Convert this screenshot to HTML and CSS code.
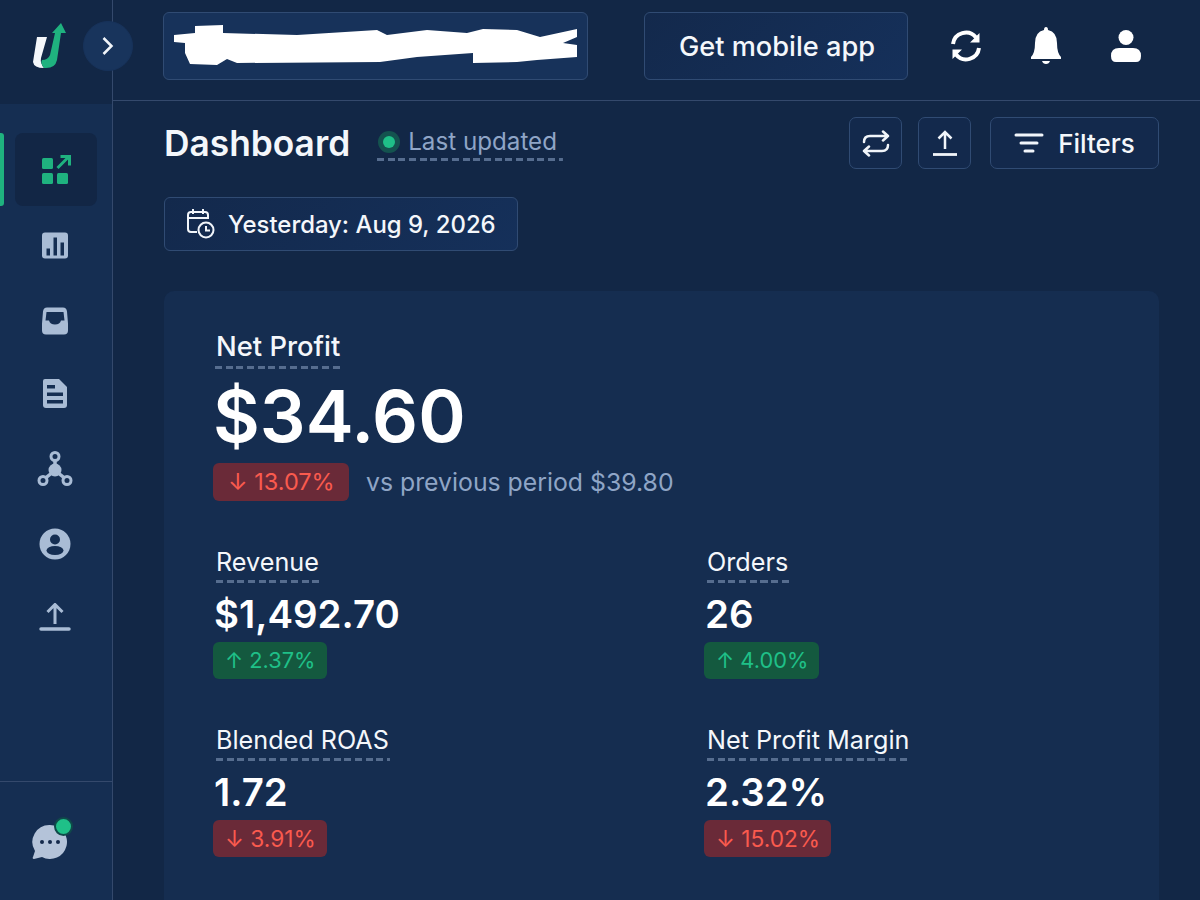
FILE: index.html
```html
<!DOCTYPE html>
<html lang="en">
<head>
    <meta charset="UTF-8">
    <meta name="viewport" content="width=device-width, initial-scale=1.0">
    <title>Dashboard</title>
    <link rel="stylesheet" href="styles.css">
</head>
<body>
    <div class="app">
        <aside class="sidebar">
            <div class="logo">
                <svg width="36" height="48" viewBox="32 22 36 48">
                    <path fill="#f4f7fb" d="M37 37H47L41 58Q40 63 44 68Q34 68 33 62Z"/>
                    <path fill="#1fb27f" d="M44 68Q55 69 57 60L61 33H66L61 23L52 33H55L50 55Q48 60 42 60Q40 63 44 68Z"/>
                </svg>
            </div>
            <nav class="nav">
                <a class="nav-item active">
                    <span class="nav-pill">
                        <svg width="32" height="32" viewBox="0 0 32 32">
                            <rect x="3" y="4" width="11" height="11" rx="1.5" fill="#1fb27f"/>
                            <rect x="3" y="19" width="11" height="11" rx="1.5" fill="#1fb27f"/>
                            <rect x="18" y="19" width="11" height="11" rx="1.5" fill="#1fb27f"/>
                            <path d="M18.5 14L30 2.5M21.500 2.500H30.500V11.500" fill="none" stroke="#1fb27f" stroke-width="3"/>
                        </svg>
                    </span>
                </a>
                <a class="nav-item">
                    <svg width="32" height="32" viewBox="0 -1.500 32 32">
                        <rect x="3" y="3" width="26" height="26" rx="3" fill="#a9bcd5"/>
                        <rect x="7.500" y="19" width="3.500" height="7" fill="#152e52"/>
                        <rect x="14.500" y="8" width="3.500" height="18" fill="#152e52"/>
                        <rect x="21.500" y="13" width="3.500" height="13" fill="#152e52"/>
                    </svg>
                </a>
                <a class="nav-item">
                    <svg width="32" height="32" viewBox="0 -2.500 32 32">
                        <path fill="#a9bcd5" fill-rule="evenodd" d="M8 2H24Q27.500 2 28 6L29 18V25Q29 29 25 29H7Q3 29 3 25V18L4 6Q4.500 2 8 2ZM7.500 6.500L6.500 15H10Q11 19 16 19Q21 19 22 15H25.500L24.500 6.500Z"/>
                    </svg>
                </a>
                <a class="nav-item">
                    <svg width="32" height="32" viewBox="0 0 32 32">
                        <path fill="#a9bcd5" d="M6 1H20L28 9V27Q28 30 25 30H7Q4 30 4 27V3Q4 1 6 1Z"/>
                        <rect x="8" y="7" width="8" height="3.500" fill="#152e52"/>
                        <rect x="8" y="14.500" width="16" height="3.500" fill="#152e52"/>
                        <rect x="8" y="22" width="16" height="3.500" fill="#152e52"/>
                    </svg>
                </a>
                <a class="nav-item">
                    <svg width="36" height="36" viewBox="0 0 36 36">
                        <path d="M18 8V18M6 29L18 19.500L30 29" stroke="#a9bcd5" stroke-width="3.500" fill="none"/>
                        <circle cx="18" cy="19" r="6.500" fill="#a9bcd5"/>
                        <circle cx="18" cy="5.500" r="4" fill="#152e52" stroke="#a9bcd5" stroke-width="3"/>
                        <circle cx="6" cy="29.500" r="4" fill="#152e52" stroke="#a9bcd5" stroke-width="3"/>
                        <circle cx="30" cy="29.500" r="4" fill="#152e52" stroke="#a9bcd5" stroke-width="3"/>
                    </svg>
                </a>
                <a class="nav-item">
                    <svg width="32" height="32" viewBox="0 0 32 32">
                        <circle cx="16" cy="16" r="15.500" fill="#a9bcd5"/>
                        <circle cx="16" cy="11.500" r="5" fill="#152e52"/>
                        <ellipse cx="16" cy="22.500" rx="8.500" ry="4.500" fill="#152e52"/>
                    </svg>
                </a>
                <a class="nav-item">
                    <svg width="32" height="32" viewBox="0 3 32 32">
                        <path d="M16 24V5M8.500 12L16 4.500L23.500 12" fill="none" stroke="#a9bcd5" stroke-width="3"/>
                        <path d="M2 29H30" stroke="#a9bcd5" stroke-width="3.500" stroke-linecap="round"/>
                    </svg>
                </a>
            </nav>
            <div class="sidebar-footer">
                <div class="chat">
                    <svg width="36" height="36" viewBox="0 0 36 36">
                        <path fill="#b4c3d9" d="M18 1A17 17 0 1 1 10 33L2 35Q0 35 1 33L3 27A17 17 0 0 1 18 1Z"/>
                        <circle cx="10" cy="18" r="2" fill="#14294b"/>
                        <circle cx="18" cy="18" r="2" fill="#14294b"/>
                        <circle cx="26" cy="18" r="2" fill="#14294b"/>
                    </svg>
                    <span class="chat-dot"></span>
                </div>
            </div>
        </aside>

        <button class="toggle">
            <svg width="16" height="20" viewBox="0 0 16 20">
                <path d="M3.500 2L11.500 10L3.500 18" fill="none" stroke="#f1f5fa" stroke-width="2.500"/>
            </svg>
        </button>

        <main class="main">
            <header class="topbar">
                <div class="store-box">
                    <svg width="425" height="68" viewBox="163 12 425 68">
                        <path fill="#fff" d="M174 35L195 33V26L223 25V33L297 35L377 30L387 35L427 30L467 33L483 29L517 30L540 37L577 29V37L563 43L577 45V57L537 60L517 62L473 63V53L417 57L380 62L237 63L227 59L217 65L190 64L185 53V43L174 42Z"/>
                    </svg>
                </div>
                <button class="mobile-btn">Get mobile app</button>
                <div class="top-icons">
                    <svg width="36" height="36" viewBox="0 0 36 36">
                        <path d="M5 16A13 13 0 0 1 28 9.500M31 20A13 13 0 0 1 8 26.500" fill="none" stroke="#fff" stroke-width="4"/>
                        <path fill="#fff" d="M31.500 5V14.500H22ZM4.500 31V21.500H14Z"/>
                    </svg>
                    <svg width="36" height="40" viewBox="0 0 36 40">
                        <path fill="#fff" d="M16 4Q16 1 18 1Q20 1 20 4Q29 6 29 17Q29 27 33 31V33H3V31Q7 27 7 17Q7 6 16 4ZM14 35H22Q21 38 18 38Q15 38 14 35Z"/>
                    </svg>
                    <svg width="36" height="36" viewBox="0 0 36 36">
                        <circle cx="18" cy="9.500" r="7.500" fill="#fff"/>
                        <path fill="#fff" d="M11 20H25Q33 20 33 28Q33 34 28 34H8Q3 34 3 28Q3 20 11 20Z"/>
                    </svg>
                </div>
            </header>

            <div class="content">
                <div class="title-row">
                    <h1>Dashboard</h1>
                    <div class="updated dashed">
                        <span class="status-dot"></span>
                        <span>Last updated</span>
                    </div>
                    <div class="actions">
                        <button class="icon-btn">
                            <svg width="28" height="27" viewBox="0 0 28 27">
                                <path d="M2 12Q2 6 8 6H26M21 1.500L26 6L21 10.500M26 15Q26 21 20 21H2M7 16.500L2 21L7 25.500" fill="none" stroke="#f1f5fa" stroke-width="2.500" stroke-linecap="round" stroke-linejoin="round"/>
                            </svg>
                        </button>
                        <button class="icon-btn">
                            <svg width="28" height="28" viewBox="0 0 28 28">
                                <path d="M14 20V3M7.500 9.500L14 3L20.500 9.500" fill="none" stroke="#f1f5fa" stroke-width="2.500"/>
                                <path d="M2 25.500H26" stroke="#f1f5fa" stroke-width="2.800"/>
                            </svg>
                        </button>
                        <button class="filter-btn">
                            <svg width="30" height="22" viewBox="0 0 30 22">
                                <path d="M2 3H28M7 11H23M11 19H19" stroke="#f1f5fa" stroke-width="3" stroke-linecap="round"/>
                            </svg>
                            Filters
                        </button>
                    </div>
                </div>

                <button class="date-chip">
                    <svg width="32" height="32" viewBox="0 0 32 32">
                        <path d="M12 24H6Q3 24 3 21V7Q3 4 6 4H20Q23 4 23 7V11M3 10H23M8 1V6M18 1V6" fill="none" stroke="#f1f5fa" stroke-width="2"/>
                        <circle cx="21" cy="22" r="7.500" fill="none" stroke="#f1f5fa" stroke-width="2"/>
                        <path d="M21 18V22.500H25" fill="none" stroke="#f1f5fa" stroke-width="2"/>
                    </svg>
                    Yesterday: Aug 9, 2026
                </button>

                <section class="card">
                    <div class="hero-label"><span class="dashed">Net Profit</span></div>
                    <div class="hero-value">$34.60</div>
                    <div class="hero-delta">
                        <span class="delta down large">↓ 13.07%</span>
                        <span class="compare">vs previous period $39.80</span>
                    </div>

                    <div class="metrics">
                        <div class="metric">
                            <div class="metric-label"><span class="dashed">Revenue</span></div>
                            <div class="metric-value">$1,492.70</div>
                            <span class="delta up">↑ 2.37%</span>
                        </div>
                        <div class="metric">
                            <div class="metric-label"><span class="dashed">Orders</span></div>
                            <div class="metric-value">26</div>
                            <span class="delta up">↑ 4.00%</span>
                        </div>
                        <div class="metric">
                            <div class="metric-label"><span class="dashed">Blended ROAS</span></div>
                            <div class="metric-value">1.72</div>
                            <span class="delta down">↓ 3.91%</span>
                        </div>
                        <div class="metric">
                            <div class="metric-label"><span class="dashed">Net Profit Margin</span></div>
                            <div class="metric-value">2.32%</div>
                            <span class="delta down">↓ 15.02%</span>
                        </div>
                    </div>
                </section>
            </div>
        </main>
    </div>
</body>
</html>
```

FILE: styles.css
```css
* {
    margin: 0;
    padding: 0;
    box-sizing: border-box;
    font-family: 'Inter', 'Liberation Sans', sans-serif;
}

body {
    background: #122746;
    height: 900px;
    overflow: hidden;
    color: #f4f7fb;
}

button {
    color: #f4f7fb;
    cursor: pointer;
}

.app {
    display: flex;
    height: 900px;
    position: relative;
}

.sidebar {
    width: 113px;
    flex-shrink: 0;
    display: flex;
    flex-direction: column;
    border-right: 1px solid #34496c;
    background: #152e52;
}

.logo {
    height: 104px;
    padding: 22px 0 0 32px;
    background: #122746;
}

.nav {
    flex: 1;
    padding-top: 27px;
}

.nav-item {
    display: flex;
    align-items: center;
    justify-content: center;
    height: 75px;
    padding-right: 2px;
    position: relative;
}

.nav-item.active::before {
    content: '';
    position: absolute;
    left: 0;
    top: 2px;
    width: 4px;
    height: 73px;
    background: #1fb27f;
    border-radius: 0 3px 3px 0;
}

.nav-pill {
    display: flex;
    align-items: center;
    justify-content: center;
    width: 82px;
    height: 73px;
    margin: 2px 0 0 2px;
    padding-right: 2px;
    background: #122645;
    border-radius: 8px;
}

.sidebar-footer {
    height: 119px;
    border-top: 1px solid #34496c;
    padding: 42px 0 0 32px;
}

.chat {
    position: relative;
    width: 36px;
    height: 36px;
}

.chat-dot {
    position: absolute;
    top: -7px;
    left: 22px;
    width: 19px;
    height: 19px;
    background: #1fc088;
    border: 2px solid #0f4a4a;
    border-radius: 50%;
}

.toggle {
    position: absolute;
    left: 83px;
    top: 21px;
    width: 50px;
    height: 50px;
    display: flex;
    align-items: center;
    justify-content: center;
    background: #18345c;
    border: 1px solid #17325a;
    border-radius: 50%;
}

.main {
    flex: 1;
    min-width: 0;
}

.topbar {
    height: 101px;
    display: flex;
    align-items: flex-start;
    padding: 12px 0 0 50px;
    border-bottom: 1px solid #34496c;
}

.store-box {
    width: 425px;
    height: 68px;
    background: #17325a;
    border: 1px solid #304b73;
    border-radius: 6px;
    overflow: hidden;
}

.store-box svg {
    display: block;
    margin: -1px;
}

.mobile-btn {
    width: 264px;
    height: 68px;
    margin-left: 56px;
    padding-left: 2px;
    background: linear-gradient(135deg, #13294c, #15305a);
    border: 1px solid #304b73;
    border-radius: 6px;
    font-size: 27.200px;
    font-weight: 500;
}

.top-icons {
    display: flex;
    align-items: center;
    gap: 44px;
    height: 68px;
    margin-left: 40px;
}

.content {
    padding: 16px 41px 0 51px;
}

.title-row {
    display: flex;
    align-items: center;
    height: 52px;
}

h1 {
    font-size: 35.300px;
    font-weight: 600;
    margin-right: 27px;
}

.dashed {
    display: inline-block;
    padding: 0 1px 6px 0;
    background-image: repeating-linear-gradient(90deg, #566d8f 0 7px, transparent 7px 10.700px);
    background-size: 100% 3px;
    background-position: bottom;
    background-repeat: no-repeat;
}

.updated {
    display: flex;
    align-items: center;
    gap: 7px;
    margin-top: 2px;
    padding-right: 6px;
    padding-bottom: 5px;
    font-size: 24.200px;
    color: #8fa5c6;
}

.status-dot {
    width: 12px;
    height: 12px;
    margin: 0 6px;
    background: #1fc088;
    border-radius: 50%;
    box-shadow: 0 0 0 5px #14534f;
}

.actions {
    display: flex;
    align-items: center;
    margin-left: auto;
}

.icon-btn {
    width: 53px;
    height: 52px;
    display: flex;
    align-items: center;
    justify-content: center;
    margin-right: 16px;
    background: #13294c;
    border: 1px solid #304b73;
    border-radius: 7px;
}

.filter-btn {
    width: 169px;
    height: 52px;
    display: flex;
    align-items: center;
    justify-content: center;
    gap: 14px;
    margin-left: 3px;
    background: #13294c;
    border: 1px solid #304b73;
    border-radius: 7px;
    font-size: 26px;
    font-weight: 500;
}

.date-chip {
    display: flex;
    align-items: center;
    gap: 11px;
    width: 354px;
    height: 54px;
    margin-top: 28px;
    padding-left: 20px;
    background: linear-gradient(135deg, #13294c, #15305a);
    border: 1px solid #304b73;
    border-radius: 6px;
    font-size: 23.900px;
    font-weight: 500;
}

.card {
    margin-top: 40px;
    padding: 38px 49px 0;
    height: 609px;
    background: #152d50;
    border-radius: 10px 10px 0 0;
}

.hero-label {
    padding-left: 2px;
    font-size: 27.400px;
    font-weight: 500;
}

.hero-label .dashed {
    padding: 0 3px 6px 1px;
}

.hero-value {
    margin-top: 3px;
    font-size: 72px;
    line-height: 88px;
    font-weight: 600;
    color: #fff;
}

.hero-delta {
    display: flex;
    align-items: center;
    gap: 17px;
    margin-top: 3px;
}

.delta {
    display: inline-block;
    height: 37px;
    line-height: 37px;
    padding: 0 11px 0 12px;
    border-radius: 6px;
    font-size: 22.700px;
}

.delta.large {
    width: 136px;
    height: 38px;
    line-height: 38px;
    padding: 0 0 0 15px;
    font-size: 23.500px;
}

.delta.up {
    background: #14593f;
    color: #1fc088;
    font-size: 21.800px;
}

.delta.down {
    background: #6a2a38;
    color: #fa5a4e;
}

.compare {
    font-size: 24.800px;
    color: #8fa5c6;
}

.metrics {
    display: grid;
    grid-template-columns: 491px 1fr;
    margin-top: 46px;
    row-gap: 46px;
}

.metric-label {
    padding-left: 3px;
    font-size: 25.200px;
}

.metric-value {
    margin: 8px 0 5px 1px;
    font-size: 38.400px;
    line-height: 46px;
    font-weight: 600;
    color: #fff;
}
```
